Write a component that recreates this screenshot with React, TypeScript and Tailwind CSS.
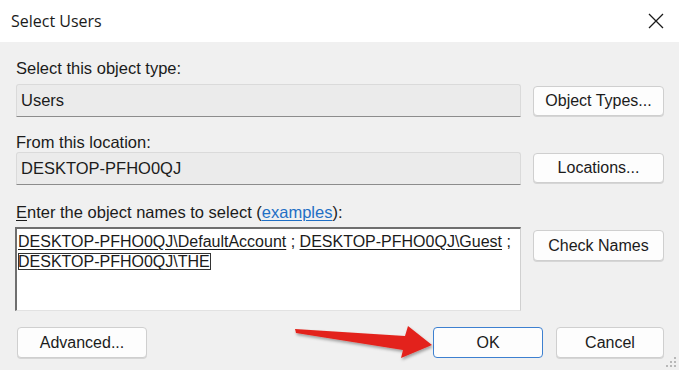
import React from 'react';

const font = { fontFamily: '"Liberation Sans", Arial, sans-serif' };

const Btn = ({ children, className = '' }: { children: React.ReactNode; className?: string }) => (
  <div
    className={`flex items-center justify-center h-[30px] rounded-[4px] border border-[#cfcfcf] bg-[#fdfdfd] text-[16px] text-[#1b1b1b] shadow-[0_1px_0_#d6d6d6] ${className}`}
  >
    {children}
  </div>
);

const App = () => {
  return (
    <div className="relative w-[679px] h-[370px] overflow-hidden bg-[#f0f0f0] text-[#1b1b1b]" style={font}>
      {/* title bar */}
      <div className="h-[42px] bg-white flex items-center justify-between pl-[11px] pr-[12px]">
        <span className="text-[16px] text-[#1a1a1a]" style={{ fontFamily: '"Open Sans", sans-serif' }}>
          Select Users
        </span>
        <svg width="18" height="18" viewBox="0 0 18 18" className="mr-[2px]">
          <path d="M2 2 L16 16 M16 2 L2 16" stroke="#1a1a1a" strokeWidth="1.3" />
        </svg>
      </div>

      <div className="pl-[16px] pr-[15px] pt-[16px]">
        {/* object type */}
        <div className="text-[16.5px] leading-[20px]">Select this object type:</div>
        <div className="flex gap-[12px] mt-[6px]">
          <div className="flex-1 h-[33px] flex items-center pl-[4px] bg-[#ebebeb] border border-[#dadada] border-b-[#8c8c8c] rounded-t-[3px] text-[16.5px]">
            Users
          </div>
          <Btn className="w-[131px] mt-[2px]">Object Types...</Btn>
        </div>

        {/* location */}
        <div className="text-[16.5px] leading-[20px] mt-[15px]">From this location:</div>
        <div className="flex gap-[12px]">
          <div className="flex-1 h-[33px] flex items-center pl-[4px] bg-[#ebebeb] border border-[#dadada] border-b-[#8c8c8c] rounded-t-[3px] text-[16.5px]">
            DESKTOP-PFHO0QJ
          </div>
          <Btn className="w-[131px] mt-[1px]">Locations...</Btn>
        </div>

        {/* names */}
        <div className="text-[16.5px] leading-[20px] mt-[17px]">
          <span className="underline underline-offset-2">E</span>nter the object names to select (
          <span className="text-[#1f6fc5] underline underline-offset-2">examples</span>):
        </div>
        <div className="flex gap-[12px] mt-[5px]">
          <div className="flex-1 -ml-[1px] h-[84px] bg-white border-t-2 border-l-2 border-t-[#6f6f6f] border-l-[#6f6f6f] border-r border-b border-r-[#d0d0d0] border-b-[#e2e2e2] pl-[1px] pt-[3px] text-[16px] leading-[20px]">
            <div className="whitespace-nowrap">
              <span className="underline underline-offset-2">DESKTOP-PFHO0QJ\DefaultAccount</span>
              <span> ; </span>
              <span className="underline underline-offset-2">DESKTOP-PFHO0QJ\Guest</span>
              <span> ;</span>
            </div>
            <div className="whitespace-nowrap">
              <span className="underline underline-offset-2 outline outline-1 outline-[#333] outline-offset-[-1px] pr-[1px]">
                DESKTOP-PFHO0QJ\THE
              </span>
            </div>
          </div>
          <Btn className="w-[131px] mt-[3px] h-[31px]">Check Names</Btn>
        </div>

        {/* bottom buttons */}
        <div className="flex items-center mt-[16px]">
          <Btn className="w-[130px] h-[31px] ml-[1px]">Advanced...</Btn>
          <div className="flex-1" />
          <div className="flex items-center justify-center w-[110px] h-[31px] rounded-[4px] border-[1.5px] border-[#3d80d0] bg-[#fdfdfd] text-[16px]">
            OK
          </div>
          <Btn className="w-[108px] h-[31px] ml-[13px]">Cancel</Btn>
        </div>
      </div>

      {/* red arrow annotation */}
      <svg className="absolute left-0 top-0 pointer-events-none" width="679" height="370">
        <defs>
          <filter id="sh" x="-10%" y="-30%" width="120%" height="160%">
            <feDropShadow dx="1" dy="2" stdDeviation="1.5" floodColor="#000" floodOpacity="0.35" />
          </filter>
        </defs>
        <polygon
          points="295,329 405,336 408,326 432,345 401,358 403,350 296,333"
          fill="#e3231b"
          filter="url(#sh)"
        />
      </svg>

      {/* resize grip */}
      <svg className="absolute right-[2px] bottom-[2px]" width="12" height="12">
        {[[9, 1], [9, 5], [5, 5], [9, 9], [5, 9], [1, 9]].map(([x, y], i) => (
          <rect key={i} x={x} y={y} width="2" height="2" fill="#b8b8b8" />
        ))}
      </svg>
    </div>
  );
};

export default App;
